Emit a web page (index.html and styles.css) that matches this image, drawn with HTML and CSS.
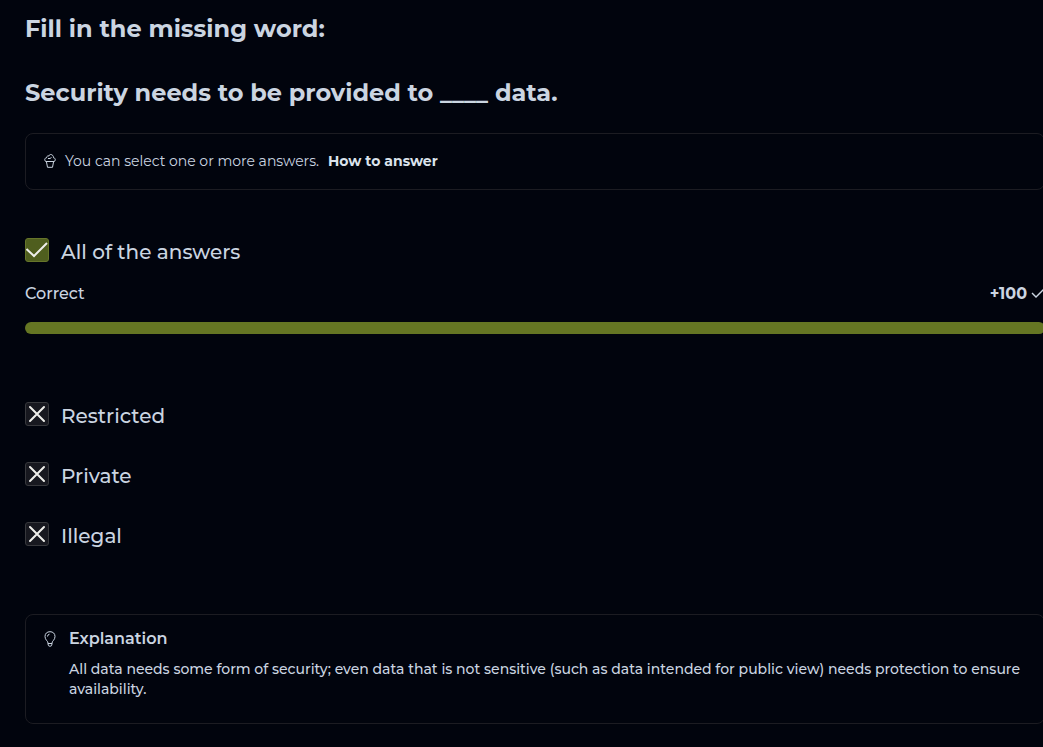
FILE: index.html
```html
<!DOCTYPE html>
<html lang="en">
<head>
<meta charset="utf-8">
<meta name="viewport" content="width=device-width, initial-scale=1">
<title>Quiz question</title>
<link rel="stylesheet" href="styles.css">
</head>
<body>
<main class="quiz">
  <h1 class="question"><span>Fill in the missing word:</span><span>Security needs to be provided to ____ data.</span></h1>
  <div class="hint">
    <svg class="hint-icon" viewBox="0 0 12 16" aria-hidden="true"><path d="M2 8.500C0 7.500 .5 5 2.500 4.800C2.500 3 4 2.800 5 3C5.500 1.500 6 1.500 6.500 1.500C8.500 1.500 9.500 3 9.500 4.800C11.500 5 12 7.500 10 8.500M4 5.500H6L7.500 4.500M1.500 8.500H10.500M2.500 9L3.500 14.300H8.500L9.500 9"/></svg>
    <span class="hint-text">You can select one or more answers.</span>
    <a class="hint-link" href="#how">How to answer</a>
  </div>
  <form class="answers">
    <div class="result">
      <label class="option"><input class="box right" type="checkbox" checked><span>All of the answers</span></label>
      <div class="score"><span id="correct-label">Correct</span><span class="points"><b>+100</b><svg class="tick" viewBox="0 0 14 12" aria-hidden="true"><path d="M1 5L5 9L13 1"/></svg></span></div>
      <div class="bar" role="progressbar" aria-labelledby="correct-label" aria-valuenow="100"></div>
    </div>
    <label class="option"><input class="box wrong" type="checkbox"><span>Restricted</span></label>
    <label class="option"><input class="box wrong" type="checkbox"><span>Private</span></label>
    <label class="option"><input class="box wrong" type="checkbox"><span>Illegal</span></label>
  </form>
  <section class="explanation">
    <svg class="bulb" viewBox="0 0 12 16" aria-hidden="true"><path d="M4 12C4 10 1 9 1 5.500C1 2.500 3 .7 6 .7S11 2.500 11 5.500C11 9 8 10 8 12M3.500 5.500Q3.500 3.500 5.500 3.200M3.500 12.500H8.500M4 13Q4 15.300 6 15.300T8 13"/></svg>
    <div>
      <h2 class="explanation-title">Explanation</h2>
      <p class="explanation-text">All data needs some form of security; even data that is not sensitive (such as data intended for public view) needs protection to ensure availability.</p>
    </div>
  </section>
</main>
</body>
</html>
```
FILE: styles.css
```css
* { box-sizing: border-box; }
body {
  margin: 0;
  overflow-x: hidden;
  background: #01040d;
  color: #cbd5e1;
  font-family: Montserrat, Inter, sans-serif;
  font-weight: 500;
}
.quiz { margin: 13px -2px 0 25px; }
svg { flex: none; fill: none; stroke: #cbd5e1; stroke-width: 1; }
.question {
  display: flex;
  flex-direction: column;
  gap: 32px;
  margin: 0;
  font-size: 24px;
  line-height: 32px;
  font-weight: 700;
}
.hint {
  display: flex;
  align-items: center;
  gap: 9px;
  margin-top: 24px;
  padding: 17px 18px 18px;
  border: 1px solid #1c1c22;
  border-radius: 8px;
  font-size: 14px;
  line-height: 20px;
}
.hint-icon { width: 12px; height: 16px; }
.hint-text { color: #cbd5e1; font-weight: 400; }
.hint-link { color: #dbe3ec; font-weight: 700; text-decoration: none; }
.answers { display: flex; flex-direction: column; gap: 32px; margin-top: 48px; }
.result { margin-bottom: 36px; }
.option {
  display: flex;
  gap: 12px;
  font-size: 20px;
  line-height: 28px;
}
.box {
  flex: none;
  appearance: none;
  width: 24px;
  height: 24px;
  margin: 0;
  border: 1px solid #37383c;
  border-radius: 3px;
  background: #17181f center / 22px 22px no-repeat;
}
.box.right {
  border-color: #66752a;
  background-color: #4f5e1e;
  background-image: url("data:image/svg+xml,%3Csvg xmlns='http://www.w3.org/2000/svg' viewBox='0 0 22 22'%3E%3Cpath d='M0.500 10L8 17L21 4' fill='none' stroke='%23eeeeea' stroke-width='2'/%3E%3C/svg%3E");
}
.box.wrong {
  background-image: url("data:image/svg+xml,%3Csvg xmlns='http://www.w3.org/2000/svg' viewBox='0 0 22 22'%3E%3Cpath d='M4 4L18 18M18 4L4 18' fill='none' stroke='%23eeeeea' stroke-width='2' stroke-linecap='round'/%3E%3C/svg%3E");
}
.score {
  display: flex;
  justify-content: space-between;
  margin-top: 16px;
  font-size: 16px;
  line-height: 24px;
}
.points { display: flex; align-items: center; gap: 4px; }
.tick { width: 14px; height: 12px; stroke-width: 1.4; }
.bar { height: 12px; margin-top: 16px; border-radius: 6px; background: #657623; }
.explanation {
  display: flex;
  gap: 13px;
  margin-top: 64px;
  padding: 14px 18px 24px;
  border: 1px solid #1c1c22;
  border-radius: 8px;
}
.bulb { width: 12px; height: 16px; margin-top: 2px; }
.explanation-title { margin: 0; font-size: 16px; line-height: 20px; font-weight: 600; }
.explanation-text { margin: 10px 0 0; font-size: 14px; line-height: 20px; }
```
